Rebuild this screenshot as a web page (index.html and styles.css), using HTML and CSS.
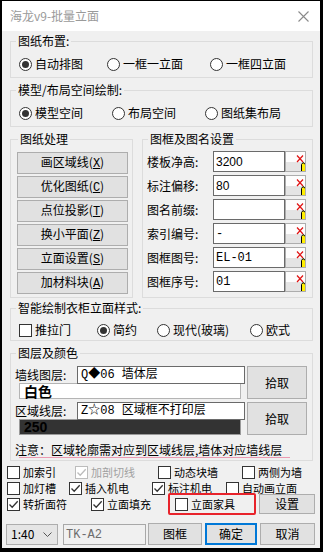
FILE: index.html
```html
<!DOCTYPE html>
<html lang="zh-CN">
<head>
  <meta charset="UTF-8" />
  <title>海龙v9-批量立面</title>
  <link rel="stylesheet" href="styles.css">
</head>
<body>
  <div class="window">
    <div class="titlebar">
      <span class="title">海龙v9-批量立面</span>
      <svg class="close" width="11" height="11" viewBox="0 0 11 11"><path d="M0.5 0.5L10.5 10.5M10.5 0.5L0.5 10.5" stroke="#8a8a8a" stroke-width="1.1"/></svg>
    </div>

    <div class="content">
      <fieldset class="group g-layout">
        <legend>图纸布置:</legend>
        <div class="opts opts-layout">
          <span class="radio checked"><i></i>自动排图</span>
          <span class="radio"><i></i>一框一立面</span>
          <span class="radio"><i></i>一框四立面</span>
        </div>
      </fieldset>

      <fieldset class="group g-space">
        <legend>模型/布局空间绘制:</legend>
        <div class="opts opts-space">
          <span class="radio checked"><i></i>模型空间</span>
          <span class="radio"><i></i>布局空间</span>
          <span class="radio"><i></i>图纸集布局</span>
        </div>
      </fieldset>

      <div class="split">
        <fieldset class="group g-tools">
          <legend>图纸处理</legend>
          <button class="btn tool">画区域线(<u>X</u>)</button>
          <button class="btn tool">优化图纸(<u>C</u>)</button>
          <button class="btn tool">点位投影(<u>T</u>)</button>
          <button class="btn tool">换小平面(<u>Z</u>)</button>
          <button class="btn tool">立面设置(<u>S</u>)</button>
          <button class="btn tool">加材料块(<u>A</u>)</button>
        </fieldset>

        <fieldset class="group g-frame">
          <legend>图框及图名设置</legend>
          <div class="field">
            <span class="field-label">楼板净高:</span>
            <input class="edit" type="text" value="3200">
            <button class="pick"><svg width="19" height="19" viewBox="0 0 19 19"><path d="M11 3.5L17 10M17 3.5L11 10" stroke="#e01010" stroke-width="1.2"/><path d="M15.5 20V12.5L17 10.5L19.5 12.5V20Z" fill="#ffee00" stroke="#000" stroke-width="1"/></svg></button>
          </div>
          <div class="field">
            <span class="field-label">标注偏移:</span>
            <input class="edit" type="text" value="80">
            <button class="pick"><svg width="19" height="19" viewBox="0 0 19 19"><path d="M11 3.5L17 10M17 3.5L11 10" stroke="#e01010" stroke-width="1.2"/><path d="M15.5 20V12.5L17 10.5L19.5 12.5V20Z" fill="#ffee00" stroke="#000" stroke-width="1"/></svg></button>
          </div>
          <div class="field">
            <span class="field-label">图名前缀:</span>
            <input class="edit" type="text" value="">
            <button class="pick"><svg width="19" height="19" viewBox="0 0 19 19"><path d="M11 3.5L17 10M17 3.5L11 10" stroke="#e01010" stroke-width="1.2"/><path d="M15.5 20V12.5L17 10.5L19.5 12.5V20Z" fill="#ffee00" stroke="#000" stroke-width="1"/></svg></button>
          </div>
          <div class="field">
            <span class="field-label">索引编号:</span>
            <input class="edit mono" type="text" value="-">
            <button class="pick"><svg width="19" height="19" viewBox="0 0 19 19"><path d="M11 3.5L17 10M17 3.5L11 10" stroke="#e01010" stroke-width="1.2"/><path d="M15.5 20V12.5L17 10.5L19.5 12.5V20Z" fill="#ffee00" stroke="#000" stroke-width="1"/></svg></button>
          </div>
          <div class="field">
            <span class="field-label">图框图号:</span>
            <input class="edit mono" type="text" value="EL-01">
            <button class="pick"><svg width="19" height="19" viewBox="0 0 19 19"><path d="M11 3.5L17 10M17 3.5L11 10" stroke="#e01010" stroke-width="1.2"/><path d="M15.5 20V12.5L17 10.5L19.5 12.5V20Z" fill="#ffee00" stroke="#000" stroke-width="1"/></svg></button>
          </div>
          <div class="field">
            <span class="field-label">图框序号:</span>
            <input class="edit mono" type="text" value="01">
            <button class="pick"><svg width="19" height="19" viewBox="0 0 19 19"><path d="M11 3.5L17 10M17 3.5L11 10" stroke="#e01010" stroke-width="1.2"/><path d="M15.5 20V12.5L17 10.5L19.5 12.5V20Z" fill="#ffee00" stroke="#000" stroke-width="1"/></svg></button>
          </div>
        </fieldset>
      </div>

      <fieldset class="group g-style">
        <legend>智能绘制衣柜立面样式:</legend>
        <div class="opts opts-style">
          <span class="check"><i></i>推拉门</span>
          <span class="radio checked"><i></i>简约</span>
          <span class="radio"><i></i>现代(玻璃)</span>
          <span class="radio"><i></i>欧式</span>
        </div>
      </fieldset>

      <fieldset class="group g-layers">
        <legend>图层及颜色</legend>
        <div class="layer">
          <div class="layer-main">
            <div class="layer-row">
              <span class="layer-label">墙线图层:</span>
              <div class="layer-name">Q◆06 墙体层</div>
            </div>
            <div class="swatch swatch-white">白色</div>
          </div>
          <button class="btn pick-big">拾取</button>
        </div>
        <div class="layer">
          <div class="layer-main">
            <div class="layer-row">
              <span class="layer-label">区域线层:</span>
              <div class="layer-name">Z☆08 区域框不打印层</div>
            </div>
            <div class="swatch swatch-dark">250</div>
          </div>
          <button class="btn pick-big">拾取</button>
        </div>
        <div class="note">注意：区域轮廓需对应到区域线层,墙体对应墙线层</div>
        <div class="note-line"></div>
      </fieldset>

      <div class="checks checks-1">
        <span class="check"><i></i>加索引</span>
        <span class="check checked disabled"><i><svg width="11" height="11" viewBox="0 0 11 11"><path d="M1.5 5.5L4.2 8.3L9.7 2.2" fill="none" stroke="#bcbcbc" stroke-width="1.3"/></svg></i>加剖切线</span>
        <span class="check"><i></i>动态块墙</span>
        <span class="check"><i></i>两侧为墙</span>
      </div>
      <div class="checks checks-2">
        <span class="check"><i></i>加灯槽</span>
        <span class="check checked"><i><svg width="11" height="11" viewBox="0 0 11 11"><path d="M1.5 5.5L4.2 8.3L9.7 2.2" fill="none" stroke="#333" stroke-width="1.3"/></svg></i>插入机电</span>
        <span class="check checked"><i><svg width="11" height="11" viewBox="0 0 11 11"><path d="M1.5 5.5L4.2 8.3L9.7 2.2" fill="none" stroke="#333" stroke-width="1.3"/></svg></i>标注机电</span>
        <span class="check"><i></i>自动画立面</span>
      </div>
      <div class="checks checks-3">
        <span class="check checked"><i><svg width="11" height="11" viewBox="0 0 11 11"><path d="M1.5 5.5L4.2 8.3L9.7 2.2" fill="none" stroke="#333" stroke-width="1.3"/></svg></i>转折面符</span>
        <span class="check checked"><i><svg width="11" height="11" viewBox="0 0 11 11"><path d="M1.5 5.5L4.2 8.3L9.7 2.2" fill="none" stroke="#333" stroke-width="1.3"/></svg></i>立面填充</span>
        <span class="check marked"><i></i>立面家具</span>
        <button class="btn settings">设置</button>
      </div>

      <div class="footer">
        <div class="combo"><span>1:40</span><svg width="9" height="5" viewBox="0 0 9 5"><path d="M0.5 0.5L4.5 4.5L8.5 0.5" fill="none" stroke="#555" stroke-width="1"/></svg></div>
        <div class="tk">TK-A2</div>
        <button class="btn foot">图框</button>
        <button class="btn foot default">确定</button>
        <button class="btn foot">取消</button>
      </div>
    </div>
  </div>
</body>
</html>
```

FILE: styles.css
```css
* {
  box-sizing: border-box;
}

body {
  margin: 0;
  background: #000;
  font-family: "Noto Sans CJK SC", "Microsoft YaHei", sans-serif;
  font-size: 12px;
  line-height: 16px;
  color: #000;
}

.window {
  margin: 1px 3px 0 2px;
  height: 547px;
  background: #f0f0f0;
  overflow: hidden;
}

.titlebar {
  height: 30px;
  background: #fff;
  display: flex;
  align-items: center;
  justify-content: space-between;
  padding: 0 11px 0 8px;
}

.title {
  color: #9a9a9a;
}

.content {
  padding: 2px 5px 0;
}

/* group boxes */
.group {
  margin: 0 2px 0 3px;
  padding: 7px 4px 5px;
  border: 1px solid #dcdcdc;
  min-width: 0;
}

.group legend {
  padding: 0 2px;
  margin-left: 1px;
  line-height: 16px;
}

.g-space {
  margin-top: 4px;
}

.opts {
  display: grid;
  height: 16px;
  margin-left: 4px;
  align-items: center;
}

.opts-layout {
  grid-template-columns: 88px 103px auto;
}

.opts-space {
  grid-template-columns: 93px 93px auto;
}

.opts-style {
  grid-template-columns: 78px 60px 93px auto;
}

/* radio + checkbox */
.radio,
.check {
  display: flex;
  align-items: center;
  gap: 3px;
  white-space: nowrap;
}

.radio i {
  width: 13px;
  height: 13px;
  border: 1px solid #333;
  border-radius: 50%;
  background: #fff;
  display: flex;
  align-items: center;
  justify-content: center;
  flex: none;
}

.radio.checked i::after {
  content: "";
  width: 7px;
  height: 7px;
  border-radius: 50%;
  background: #333;
}

.check i {
  width: 13px;
  height: 13px;
  border: 1px solid #333;
  background: #fff;
  display: flex;
  flex: none;
}

.check.disabled {
  color: #a0a0a0;
}

.check.disabled i {
  border-color: #bcbcbc;
}

/* split row */
.split {
  display: flex;
  gap: 9px;
  margin: 4px 2px 0 3px;
}

.split .group {
  margin: 0;
}

.g-tools {
  width: 123px;
  padding: 5px 4px 3px 6px;
  display: flex;
  flex-direction: column;
  gap: 2px;
}

.g-frame {
  flex: 1;
  padding: 4px 4px 3px;
  display: flex;
  flex-direction: column;
  gap: 3px;
}

.btn {
  font-family: inherit;
  font-size: 12px;
  line-height: 16px;
  color: #000;
  background: #e1e1e1;
  border: 1px solid #adadad;
  padding: 0;
  margin: 0;
}

.btn u {
  font-family: "Liberation Mono", monospace;
}

.tool {
  width: 111px;
  height: 22px;
}

.field {
  display: flex;
  align-items: center;
  height: 21px;
}

.field-label {
  width: 66px;
}

.edit {
  width: 72px;
  height: 21px;
  border: 1px solid #6a6a6a;
  background: #fff;
  font-family: "Liberation Sans", sans-serif;
  font-size: 12px;
  padding: 0 2px;
  margin: 0;
  outline: none;
}

.edit.mono {
  font-family: "Liberation Mono", monospace;
}

.pick {
  width: 21px;
  height: 21px;
  padding: 0;
  margin: 0;
  border: 1px solid #adadad;
  background: linear-gradient(#fdfdfd 55%, #e4e4e4 55%);
  overflow: hidden;
  display: flex;
}

/* wardrobe style */
.g-style {
  margin-top: 2px;
  padding: 6px 4px 2px;
}

/* layers */
.g-layers {
  margin-top: 4px;
  padding: 5px 5px 2px 4px;
}

.layer {
  display: flex;
  gap: 2px;
  height: 33px;
}

.layer + .layer {
  margin-top: 3px;
}

.layer-main {
  width: 230px;
}

.layer-row {
  display: flex;
  align-items: center;
  height: 17px;
}

.layer-label {
  width: 62px;
}

.layer-name {
  width: 168px;
  height: 18px;
  border: 1px solid #6a6a6a;
  background: #fff;
  font-family: "Liberation Mono", "Noto Sans CJK SC", monospace;
  font-size: 12px;
  line-height: 16px;
  padding: 0 3px;
  white-space: nowrap;
  overflow: hidden;
}

.swatch {
  width: 222px;
  height: 16px;
  margin-left: 4px;
  border: 1px solid #b4b4b4;
  font-weight: bold;
  font-size: 14px;
  line-height: 14px;
  padding: 0 4px;
}

.swatch-white {
  background: #fff;
}

.swatch-dark {
  background: #333;
  color: #000;
  font-family: "Liberation Sans", sans-serif;
  border-color: #9a9a9a;
}

.pick-big {
  width: 60px;
  height: 33px;
}

.note {
  margin-top: 7px;
  line-height: 15px;
}

.note-line {
  width: 271px;
  height: 1px;
  margin-left: 4px;
  background: #eb9ab2;
}

/* check rows */
.checks {
  display: grid;
  align-items: center;
  font-size: 11px;
  line-height: 14px;
}

.checks-1 {
  margin-top: 3px;
  height: 16px;
  grid-template-columns: 68px 83px 84px auto;
}

.checks-2 {
  height: 16px;
  grid-template-columns: 62px 83px 74px auto;
}

.checks-3 {
  margin-top: -3px;
  height: 22px;
  grid-template-columns: 84px 77px 88px 56px;
  column-gap: 0;
}

.marked {
  height: 22px;
  border: 2px solid #e8232b;
  border-radius: 2px;
  padding-left: 5px;
  margin-right: 3px;
}

.checks-3 .marked {
  width: 88px;
}

.settings {
  width: 56px;
  height: 20px;
  margin-left: 3px;
}

/* footer */
.footer {
  display: flex;
  align-items: center;
  margin: 8px 0 0 -1px;
  height: 22px;
}

.combo {
  width: 52px;
  height: 21px;
  background: #e5e5e5;
  border: 1px solid #adadad;
  display: flex;
  align-items: center;
  justify-content: space-between;
  padding: 0 5px 0 4px;
}

.tk {
  width: 83px;
  height: 21px;
  margin-left: 5px;
  border: 1px solid #a8a8a8;
  color: #6d6d6d;
  font-family: "Liberation Mono", monospace;
  padding: 2px 2px 0;
}

.foot {
  height: 22px;
}

.footer .foot:nth-of-type(1) {
  width: 54px;
  margin-left: 2px;
}

.footer .foot:nth-of-type(2) {
  width: 52px;
  margin-left: 3px;
}

.footer .foot:nth-of-type(3) {
  width: 55px;
  margin-left: 3px;
}

.default {
  border: 2px solid #0078d7;
}
```
